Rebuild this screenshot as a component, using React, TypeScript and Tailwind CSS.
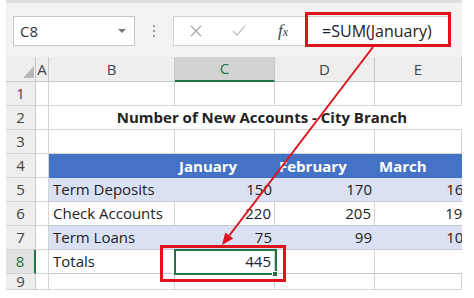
import React from 'react';

const font = { fontFamily: '"Open Sans", "Liberation Sans", sans-serif' };

const cols = [30, 13, 126, 100, 100, 87];

type Row = {
  n: number;
  label?: string;
  vals?: string[];
  kind?: 'blank' | 'title' | 'head' | 'band' | 'plain';
};

const rows: Row[] = [
  { n: 1, kind: 'blank' },
  { n: 2, kind: 'title' },
  { n: 3, kind: 'blank' },
  { n: 4, kind: 'head', vals: ['January', 'February', 'March'] },
  { n: 5, kind: 'band', label: 'Term Deposits', vals: ['150', '170', '165'] },
  { n: 6, kind: 'plain', label: 'Check Accounts', vals: ['220', '205', '190'] },
  { n: 7, kind: 'band', label: 'Term Loans', vals: ['75', '99', '105'] },
  { n: 8, kind: 'plain', label: 'Totals', vals: ['445', '', ''] },
  { n: 9, kind: 'blank' },
];

function RowHeader({ n }: { n: number }) {
  const sel = n === 8;
  return (
    <div
      className={`w-[30px] shrink-0 h-full flex items-center justify-center text-[15px] border-b border-[#d4d4d4] ${
        sel ? 'bg-[#e2e2e2] text-[#217346] border-r-2 border-r-[#217346]' : 'bg-[#eeeeee] text-[#444] border-r border-r-[#c8c8c8]'
      }`}
    >
      {n}
    </div>
  );
}

function GridRow({ r }: { r: Row }) {
  const h = r.n === 9 ? 'h-[16px]' : 'h-[24px]';
  return (
    <div className={`flex ${h} overflow-hidden`}>
      <RowHeader n={r.n} />
      <div className="w-[13px] shrink-0 h-full border-r border-b border-[#d4d4d4]" />
      {r.kind === 'title' && (
        <div className="w-[426px] shrink-0 h-full border-b border-[#d4d4d4] flex items-center justify-center font-bold text-[15px] text-[#222]">
          Number of New Accounts - City Branch
        </div>
      )}
      {r.kind === 'blank' &&
        [126, 100, 100, 87].map((w, i) => (
          <div key={i} style={{ width: w }} className="shrink-0 h-full border-r border-b border-[#d4d4d4]" />
        ))}
      {r.kind === 'head' && (
        <div className="flex h-full bg-[#4472c4] text-white font-bold text-[15px]">
          <div className="w-[126px] shrink-0" />
          {r.vals!.map((v) => (
            <div key={v} className="w-[100px] shrink-0 flex items-center pl-[4px]">
              {v}
            </div>
          ))}
        </div>
      )}
      {(r.kind === 'band' || r.kind === 'plain') && (
        <div
          className={`flex h-full text-[15px] text-[#222] ${r.kind === 'band' ? 'bg-[#d9e1f2]' : 'bg-white'}`}
        >
          <div
            className={`w-[126px] shrink-0 flex items-center pl-[4px] border-b border-[#c3c8d2] ${
              r.kind === 'plain' ? 'border-r border-r-[#d4d4d4]' : ''
            }`}
          >
            {r.label}
          </div>
          {r.vals!.map((v, i) => (
            <div
              key={i}
              className={`w-[100px] shrink-0 flex items-center justify-end pr-[3px] border-b border-[#c3c8d2] ${
                r.kind === 'plain' ? 'border-r border-r-[#d4d4d4]' : ''
              }`}
            >
              {v}
            </div>
          ))}
        </div>
      )}
    </div>
  );
}

export default function App() {
  return (
    <div className="relative w-[474px] h-[298px] bg-white overflow-hidden" style={font}>
      <div className="ml-[6px] w-[456px] h-[290px] overflow-hidden flex flex-col">
        {/* formula bar */}
        <div className="h-[3px] bg-[#dedede]" />
        <div className="h-[54px] bg-[#f2f2f2] flex items-start pt-[13px]">
          <div className="ml-[7px] w-[122px] h-[30px] bg-white border border-[#c6c6c6] flex items-center justify-between pl-[6px] pr-[8px] text-[15px] text-[#333]">
            <span>C8</span>
            <span className="w-0 h-0 border-l-[4px] border-r-[4px] border-t-[4px] border-l-transparent border-r-transparent border-t-[#777]" />
          </div>
          <div className="w-[38px] h-[30px] flex flex-col items-center justify-center gap-[3px]">
            <span className="w-[2px] h-[2px] bg-[#999]" />
            <span className="w-[2px] h-[2px] bg-[#999]" />
            <span className="w-[2px] h-[2px] bg-[#999]" />
          </div>
          <div className="w-[277px] h-[30px] bg-white border border-[#d0d0d0] flex items-center">
            <svg width="14" height="14" viewBox="0 0 14 14" className="ml-[15px]">
              <path d="M2 2 L12 12 M12 2 L2 12" stroke="#a8a8a8" strokeWidth="1.3" fill="none" />
            </svg>
            <svg width="16" height="14" viewBox="0 0 16 14" className="ml-[28px]">
              <path d="M2 7 L6 11 L14 2" stroke="#c4c4c4" strokeWidth="1.3" fill="none" />
            </svg>
            <span
              className="ml-[31px] text-[17px] italic text-[#444]"
              style={{ fontFamily: '"Liberation Serif", serif' }}
            >
              f<span className="text-[12px]">x</span>
            </span>
            <span className="ml-[34px] text-[16px] text-[#222]">=SUM(January)</span>
          </div>
        </div>

        {/* column headers */}
        <div className="flex h-[25px] bg-[#eeeeee] text-[15px] text-[#444]">
          <div className="w-[30px] shrink-0 border-r border-b border-[#c8c8c8] relative">
            <svg width="11" height="12" viewBox="0 0 11 12" className="absolute left-[17px] top-[9px]">
              <path d="M11 0 L11 12 L0 12 Z" fill="#b9b9b9" />
            </svg>
          </div>
          {['A', 'B', 'C', 'D', 'E'].map((c, i) => {
            const sel = c === 'C';
            return (
              <div
                key={c}
                style={{ width: cols[i + 1] }}
                className={`shrink-0 flex items-center justify-center ${
                  sel
                    ? 'bg-[#d3d3d3] text-[#217346] border-b-2 border-b-[#217346] border-r border-r-[#c8c8c8]'
                    : 'border-r border-b border-[#c8c8c8]'
                }`}
              >
                {c}
              </div>
            );
          })}
        </div>

        {rows.map((r) => (
          <GridRow key={r.n} r={r} />
        ))}
      </div>

      {/* selected cell C8 */}
      <div className="absolute left-[174px] top-[249px] w-[103px] h-[26px] border-2 border-[#217346]" />
      <div className="absolute left-[272px] top-[271px] w-[6px] h-[6px] bg-[#217346] border border-white" />

      {/* red highlights */}
      <div className="absolute left-[305px] top-[12px] w-[146px] h-[35px] border-[3px] border-[#e0121c]" />
      <div className="absolute left-[160px] top-[245px] w-[126px] h-[37px] border-[3px] border-[#e0121c]" />
      <svg className="absolute left-0 top-0" width="474" height="298" viewBox="0 0 474 298">
        <line x1="373" y1="47" x2="229.3" y2="235.5" stroke="#e0121c" strokeWidth="2" />
        <polygon points="222,245 233.3,238.5 225.3,232.5" fill="#e0121c" />
      </svg>
    </div>
  );
}
